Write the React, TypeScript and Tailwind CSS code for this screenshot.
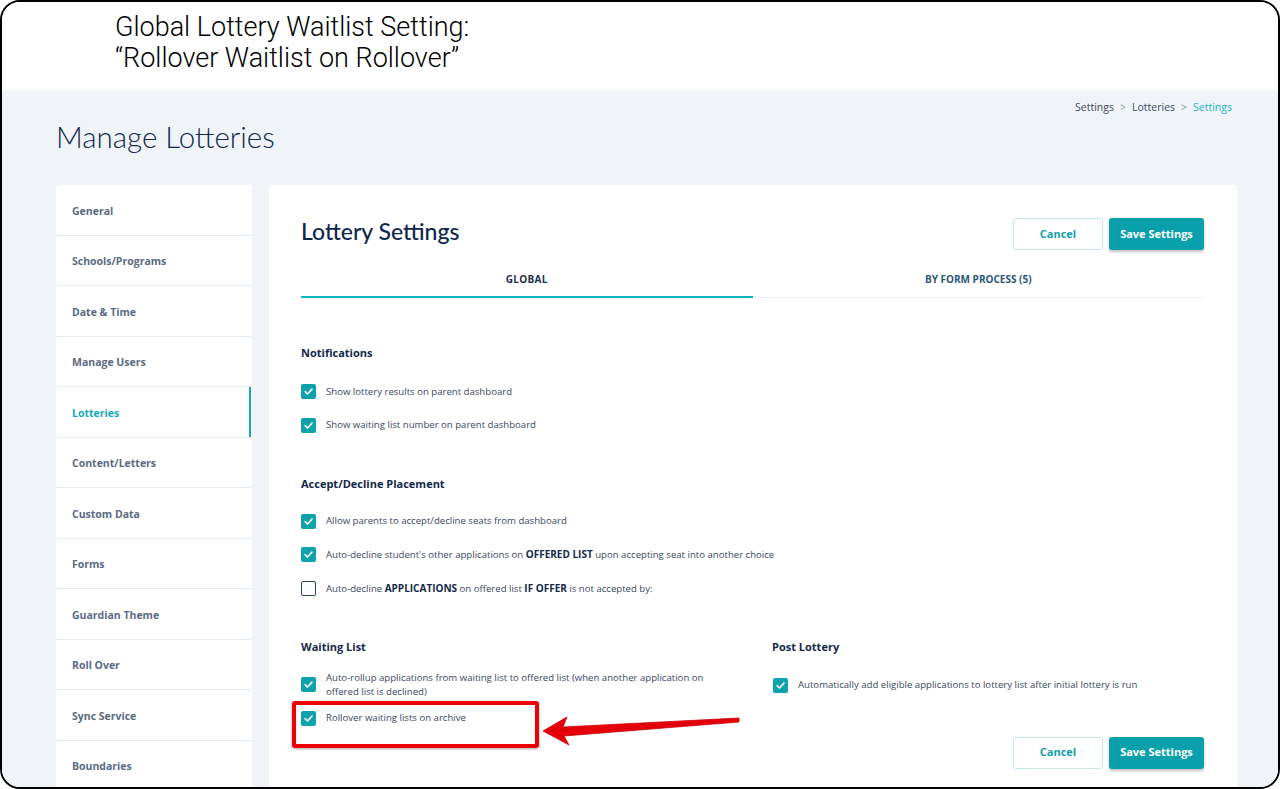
import React from "react";

const SANS = { fontFamily: '"Open Sans", "Noto Sans", sans-serif' };
const TITLE = { fontFamily: 'Lato, "Open Sans", sans-serif' };

function Check({ checked = true }: { checked?: boolean }) {
  if (!checked)
    return <span className="block w-[15px] h-[15px] shrink-0 rounded-[2px] border-[1.5px] border-[#2b4560] bg-white" />;
  return (
    <span className="flex w-[15px] h-[15px] shrink-0 items-center justify-center rounded-[2px] bg-[#0fa2ad]">
      <svg width="11" height="11" viewBox="0 0 12 12" fill="none">
        <path d="M2.3 6.2 L4.9 8.7 L9.8 3.4" stroke="white" strokeWidth="1.7" strokeLinecap="round" strokeLinejoin="round" />
      </svg>
    </span>
  );
}

function Row({ children, checked = true }: { children: React.ReactNode; checked?: boolean }) {
  return (
    <div className="flex items-center gap-[10px]">
      <Check checked={checked} />
      <span className="text-[9.6px] leading-[14px] text-[#3a4862]">{children}</span>
    </div>
  );
}

function Buttons() {
  return (
    <div className="flex gap-[6px]">
      <button className="w-[90px] h-[32px] rounded-[3px] border border-[#c5e7ec] bg-white text-[11px] font-bold text-[#109fab]">Cancel</button>
      <button className="w-[95px] h-[32px] rounded-[3px] bg-[#0aa0ab] text-[11px] font-bold text-white shadow-[0_2px_3px_rgba(0,0,0,0.25)]">Save Settings</button>
    </div>
  );
}

const NAV = [
  "General",
  "Schools/Programs",
  "Date & Time",
  "Manage Users",
  "Lotteries",
  "Content/Letters",
  "Custom Data",
  "Forms",
  "Guardian Theme",
  "Roll Over",
  "Sync Service",
  "Boundaries",
];

export default function App() {
  return (
    <div className="relative w-[1280px] h-[789px] bg-white overflow-hidden">
      <div className="relative w-[1280px] h-[789px] border-2 border-black rounded-[20px] overflow-hidden flex flex-col">
        <div className="h-[88px] shrink-0 bg-white pl-[113px] pt-[10px]" style={{ fontFamily: 'Roboto, sans-serif' }}>
          <div className="text-[27px] leading-[31px] font-light text-black">Global Lottery Waitlist Setting:</div>
          <div className="text-[27px] leading-[31px] font-light text-black">“Rollover Waitlist on Rollover”</div>
        </div>
        <div className="flex-1 bg-[#f0f4f9] pl-[54px] pr-[41px] overflow-hidden" style={SANS}>
          <div className="flex justify-end pt-[10px] pr-[5px] text-[10.5px] leading-[14px] text-[#3c4a5e]">
            <span>Settings</span>
            <span className="mx-[6px] text-[#8a96a6]">&gt;</span>
            <span>Lotteries</span>
            <span className="mx-[6px] text-[#8a96a6]">&gt;</span>
            <span className="text-[#1ab3c2]">Settings</span>
          </div>
          <div className="mt-[6px] text-[29.5px] leading-[34px] font-light text-[#10264d]" style={TITLE}>Manage Lotteries</div>
          <div className="mt-[31px] flex gap-[17px] items-start">
            <div className="w-[196px] shrink-0 bg-white rounded-[4px]">
              {NAV.map((n) => (
                <div
                  key={n}
                  className={`relative h-[50.5px] flex items-center pl-[16px] pt-[4px] border-b border-[#e4ebf4] text-[10.5px] font-bold ${n === "Lotteries" ? "text-[#14a9b7]" : "text-[#5b6a82]"}`}
                >
                  {n}
                  {n === "Lotteries" && <span className="absolute right-[1px] top-0 bottom-0 w-[2px] bg-[#14a9b7]" />}
                </div>
              ))}
            </div>
            <div className="w-[968px] shrink-0 bg-white rounded-[4px] pl-[32px] pr-[33px] pt-[33px] pb-[40px]">
              <div className="flex items-start justify-between">
                <div className="text-[23px] leading-[26px] font-medium text-[#10264d]" style={TITLE}>Lottery Settings</div>
                <Buttons />
              </div>
              <div className="mt-[12px] flex">
                <div className="flex-1 h-[36px] flex items-center justify-center border-b-[2px] border-[#0fb3c1] text-[10px] font-bold tracking-[0.3px] text-[#1c2e4d]">GLOBAL</div>
                <div className="flex-1 h-[36px] flex items-center justify-center border-b border-[#eef2f7] text-[10px] font-bold text-[#2b5877]">
                  BY FORM PROCESS (5)
                </div>
              </div>

              <div className="mt-[48px] text-[11px] font-bold text-[#14284a] leading-[14px]">Notifications</div>
              <div className="mt-[24px] flex flex-col gap-[18.5px]">
                <Row>Show lottery results on parent dashboard</Row>
                <Row>Show waiting list number on parent dashboard</Row>
              </div>

              <div className="mt-[44px] text-[11px] font-bold text-[#14284a] leading-[14px]">Accept/Decline Placement</div>
              <div className="mt-[23px] flex flex-col gap-[18.5px]">
                <Row>Allow parents to accept/decline seats from dashboard</Row>
                <Row>
                  Auto-decline student's other applications on <b className="text-[10px] text-[#14284a]">OFFERED LIST</b> upon accepting seat into another choice
                </Row>
                <Row checked={false}>
                  Auto-decline <b className="text-[10px] text-[#14284a]">APPLICATIONS</b> on offered list <b className="text-[10px] text-[#14284a]">IF OFFER</b> is not accepted by:
                </Row>
              </div>

              <div className="mt-[44px] flex">
                <div className="w-[471px] shrink-0">
                  <div className="text-[11px] font-bold text-[#14284a] leading-[14px]">Waiting List</div>
                  <div className="mt-[17px] flex items-center gap-[10px]">
                    <Check />
                    <span className="w-[390px] text-[9.6px] leading-[14px] text-[#3a4862]">
                      Auto-rollup applications from waiting list to offered list (when another application on offered list is declined)
                    </span>
                  </div>
                  <div className="mt-[12px] flex items-center gap-[10px]">
                    <Check />
                    <span className="text-[9.6px] leading-[14px] text-[#3a4862]">Rollover waiting lists on archive</span>
                  </div>
                </div>
                <div className="flex-1">
                  <div className="text-[11px] font-bold text-[#14284a] leading-[14px]">Post Lottery</div>
                  <div className="mt-[24px] ml-[1px]">
                    <Row>Automatically add eligible applications to lottery list after initial lottery is run</Row>
                  </div>
                </div>
              </div>

              <div className="mt-[11px] flex justify-end">
                <Buttons />
              </div>
            </div>
          </div>
        </div>
      </div>

      {/* annotation: red highlight box and arrow */}
      <div className="absolute left-[292px] top-[701px] w-[247px] h-[47px] border-[4px] border-[#ee0008] rounded-[3px] shadow-[0_1px_3px_rgba(0,0,0,0.35)] pointer-events-none" />
      <svg className="absolute left-0 top-0 pointer-events-none" width="1280" height="789">
        <polygon
          points="543,731 567,717 563,727 739,718 739,722 564,736 569,745"
          fill="#e3000a"
          stroke="#cc0008"
          strokeWidth="0.8"
          strokeLinejoin="round"
        />
      </svg>
    </div>
  );
}
